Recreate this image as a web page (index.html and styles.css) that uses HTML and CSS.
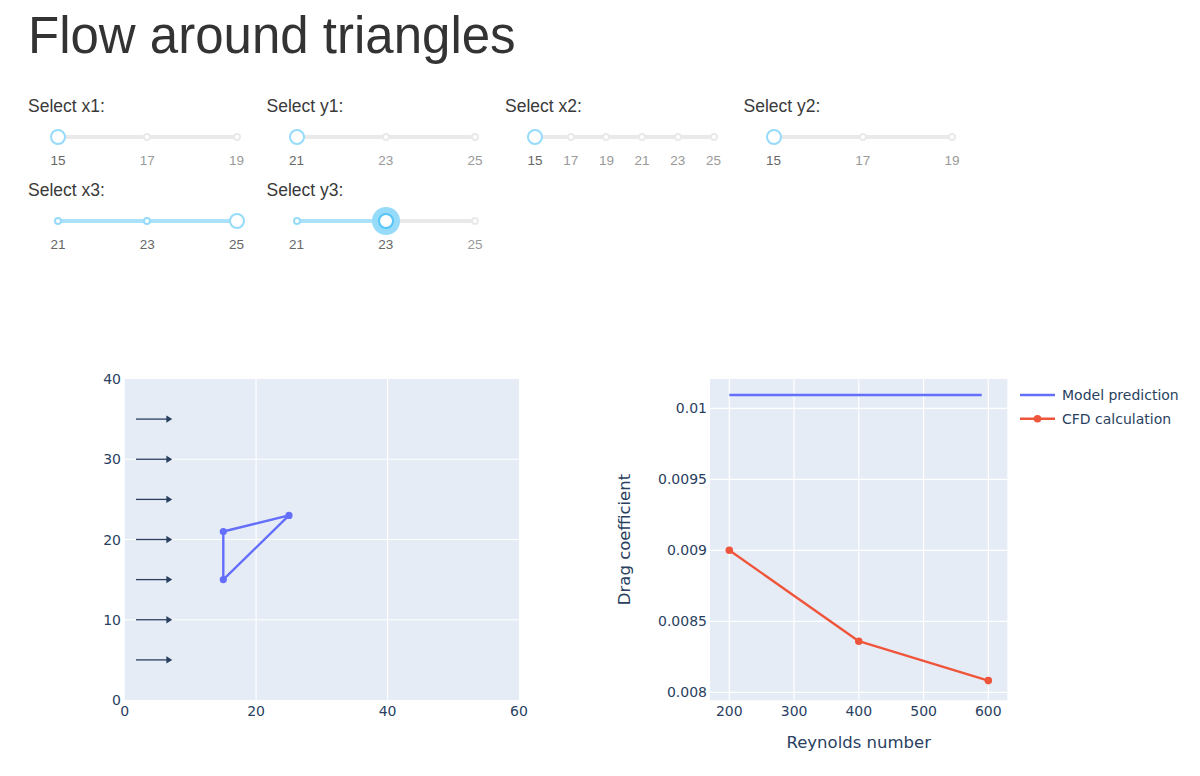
FILE: index.html
```html
<!DOCTYPE html>
<html>
<head>
<meta charset="utf-8">
<title>Flow around triangles</title>
<link rel="stylesheet" href="styles.css">
</head>
<body>
<div class="page">
  <h1 class="title">Flow around triangles</h1>
  <div class="sliders">
    <div class="field">
      <div class="label">Select x1:</div>
      <div class="slider">
        <div class="rail"></div>
        <span class="dot active" style="left:0%"></span>
        <span class="dot" style="left:50%"></span>
        <span class="dot" style="left:100%"></span>
        <span class="handle" style="left:0%"></span>
        <span class="mark active" style="left:0%">15</span>
        <span class="mark" style="left:50%">17</span>
        <span class="mark" style="left:100%">19</span>
      </div>
    </div>
    <div class="field">
      <div class="label">Select y1:</div>
      <div class="slider">
        <div class="rail"></div>
        <span class="dot active" style="left:0%"></span>
        <span class="dot" style="left:50%"></span>
        <span class="dot" style="left:100%"></span>
        <span class="handle" style="left:0%"></span>
        <span class="mark active" style="left:0%">21</span>
        <span class="mark" style="left:50%">23</span>
        <span class="mark" style="left:100%">25</span>
      </div>
    </div>
    <div class="field">
      <div class="label">Select x2:</div>
      <div class="slider">
        <div class="rail"></div>
        <span class="dot active" style="left:0%"></span>
        <span class="dot" style="left:20%"></span>
        <span class="dot" style="left:40%"></span>
        <span class="dot" style="left:60%"></span>
        <span class="dot" style="left:80%"></span>
        <span class="dot" style="left:100%"></span>
        <span class="handle" style="left:0%"></span>
        <span class="mark active" style="left:0%">15</span>
        <span class="mark" style="left:20%">17</span>
        <span class="mark" style="left:40%">19</span>
        <span class="mark" style="left:60%">21</span>
        <span class="mark" style="left:80%">23</span>
        <span class="mark" style="left:100%">25</span>
      </div>
    </div>
    <div class="field">
      <div class="label">Select y2:</div>
      <div class="slider">
        <div class="rail"></div>
        <span class="dot active" style="left:0%"></span>
        <span class="dot" style="left:50%"></span>
        <span class="dot" style="left:100%"></span>
        <span class="handle" style="left:0%"></span>
        <span class="mark active" style="left:0%">15</span>
        <span class="mark" style="left:50%">17</span>
        <span class="mark" style="left:100%">19</span>
      </div>
    </div>
    <div class="field">
      <div class="label">Select x3:</div>
      <div class="slider">
        <div class="rail"></div>
        <div class="track" style="width:100%"></div>
        <span class="dot active" style="left:0%"></span>
        <span class="dot active" style="left:50%"></span>
        <span class="dot active" style="left:100%"></span>
        <span class="handle" style="left:100%"></span>
        <span class="mark active" style="left:0%">21</span>
        <span class="mark active" style="left:50%">23</span>
        <span class="mark active" style="left:100%">25</span>
      </div>
    </div>
    <div class="field">
      <div class="label">Select y3:</div>
      <div class="slider">
        <div class="rail"></div>
        <div class="track" style="width:50%"></div>
        <span class="dot active" style="left:0%"></span>
        <span class="dot active" style="left:50%"></span>
        <span class="dot" style="left:100%"></span>
        <span class="handle focus" style="left:50%"></span>
        <span class="mark active" style="left:0%">21</span>
        <span class="mark active" style="left:50%">23</span>
        <span class="mark" style="left:100%">25</span>
      </div>
    </div>
  </div>

  <div class="graphs">
    <div class="graph">
      <svg class="chart" width="586" height="500" viewBox="0 0 586 500" xmlns="http://www.w3.org/2000/svg">
        <rect x="96.7" y="119" width="394.3" height="321" fill="#e5ecf6"/>
        <g stroke="#ffffff" stroke-width="1.2">
          <line x1="228.1" y1="119" x2="228.1" y2="440"/>
          <line x1="359.6" y1="119" x2="359.6" y2="440"/>
          <line x1="96.7" y1="359.75" x2="491" y2="359.75"/>
          <line x1="96.7" y1="279.5" x2="491" y2="279.5"/>
          <line x1="96.7" y1="199.25" x2="491" y2="199.25"/>
        </g>
        <g stroke="#2a3f5f" stroke-width="1.3" fill="#2a3f5f">
          <line x1="108" y1="159.1" x2="140" y2="159.1"/><polygon points="139,156.6 143,159.1 139,161.6"/>
          <line x1="108" y1="199.25" x2="140" y2="199.25"/><polygon points="139,196.75 143,199.25 139,201.75"/>
          <line x1="108" y1="239.4" x2="140" y2="239.4"/><polygon points="139,236.9 143,239.4 139,241.9"/>
          <line x1="108" y1="279.5" x2="140" y2="279.5"/><polygon points="139,277 143,279.5 139,282"/>
          <line x1="108" y1="319.6" x2="140" y2="319.6"/><polygon points="139,317.1 143,319.6 139,322.1"/>
          <line x1="108" y1="359.75" x2="140" y2="359.75"/><polygon points="139,357.25 143,359.75 139,362.25"/>
          <line x1="108" y1="399.9" x2="140" y2="399.9"/><polygon points="139,397.4 143,399.9 139,402.4"/>
        </g>
        <polyline points="195.3,319.6 195.3,271.5 261,255.4 195.3,319.6" fill="none" stroke="#636efa" stroke-width="2.4" stroke-linejoin="round"/>
        <g fill="#636efa">
          <circle cx="195.3" cy="319.6" r="3.6"/>
          <circle cx="195.3" cy="271.5" r="3.6"/>
          <circle cx="261" cy="255.4" r="3.6"/>
        </g>
        <g class="tick" text-anchor="end">
          <text x="93" y="124">40</text>
          <text x="93" y="204.25">30</text>
          <text x="93" y="284.5">20</text>
          <text x="93" y="364.75">10</text>
          <text x="93" y="445">0</text>
        </g>
        <g class="tick" text-anchor="middle">
          <text x="96.7" y="456">0</text>
          <text x="228.1" y="456">20</text>
          <text x="359.6" y="456">40</text>
          <text x="490.9" y="456">60</text>
        </g>
      </svg>
    </div>
    <div class="graph">
      <svg class="chart" width="586" height="500" viewBox="0 0 586 500" xmlns="http://www.w3.org/2000/svg">
        <rect x="96" y="119" width="297.3" height="321.3" fill="#e5ecf6"/>
        <g stroke="#ffffff" stroke-width="1.2">
          <line x1="115.3" y1="119" x2="115.3" y2="440.3"/>
          <line x1="180.1" y1="119" x2="180.1" y2="440.3"/>
          <line x1="244.8" y1="119" x2="244.8" y2="440.3"/>
          <line x1="309.6" y1="119" x2="309.6" y2="440.3"/>
          <line x1="374.3" y1="119" x2="374.3" y2="440.3"/>
          <line x1="96" y1="148.3" x2="393.3" y2="148.3"/>
          <line x1="96" y1="219.3" x2="393.3" y2="219.3"/>
          <line x1="96" y1="290.3" x2="393.3" y2="290.3"/>
          <line x1="96" y1="361.3" x2="393.3" y2="361.3"/>
          <line x1="96" y1="432.3" x2="393.3" y2="432.3"/>
        </g>
        <line x1="115.3" y1="135" x2="367.7" y2="135" stroke="#636efa" stroke-width="2.4"/>
        <polyline points="115.3,290.3 244.8,381.2 374.3,420.6" fill="none" stroke="#ef553b" stroke-width="2.4" stroke-linejoin="round"/>
        <g fill="#ef553b">
          <circle cx="115.3" cy="290.3" r="3.8"/>
          <circle cx="244.8" cy="381.2" r="3.8"/>
          <circle cx="374.3" cy="420.6" r="3.8"/>
        </g>
        <g class="tick" text-anchor="end">
          <text x="93" y="153.3">0.01</text>
          <text x="93" y="224.3">0.0095</text>
          <text x="93" y="295.3">0.009</text>
          <text x="93" y="366.3">0.0085</text>
          <text x="93" y="437.3">0.008</text>
        </g>
        <g class="tick" text-anchor="middle">
          <text x="115.3" y="456">200</text>
          <text x="180.1" y="456">300</text>
          <text x="244.8" y="456">400</text>
          <text x="309.6" y="456">500</text>
          <text x="374.3" y="456">600</text>
        </g>
        <text class="axis-title" x="244.7" y="488" text-anchor="middle">Reynolds number</text>
        <text class="axis-title" transform="translate(16 279.5) rotate(-90)" text-anchor="middle">Drag coefficient</text>
        <line x1="406" y1="135" x2="441" y2="135" stroke="#636efa" stroke-width="2.4"/>
        <text class="legend" x="448" y="140">Model prediction</text>
        <line x1="406" y1="158.7" x2="441" y2="158.7" stroke="#ef553b" stroke-width="2.4"/>
        <circle cx="423.5" cy="158.7" r="3.8" fill="#ef553b"/>
        <text class="legend" x="448" y="163.7">CFD calculation</text>
      </svg>
    </div>
  </div>
</div>
</body>
</html>
```

FILE: styles.css
```css
html, body {
  margin: 0;
  padding: 0;
  background: #ffffff;
  overflow: hidden;
}

.page {
  padding: 6px 0 0 28px;
  font-family: "Liberation Sans", Arial, Helvetica, sans-serif;
  color: #333333;
}

.title {
  margin: 0;
  font-size: 51px;
  line-height: 60px;
  font-weight: normal;
  color: #333333;
}

.sliders {
  margin-top: 30px;
  display: grid;
  grid-template-columns: repeat(4, 238.5px);
  grid-auto-rows: 80px;
  row-gap: 4px;
}

.label {
  font-size: 17.5px;
  line-height: 20px;
  color: #3a3a3a;
}

.slider {
  position: relative;
  height: 60px;
  margin: 0 30px;
}

.rail {
  position: absolute;
  top: 19px;
  left: 0;
  right: 0;
  height: 4px;
  border-radius: 2px;
  background: #e9e9e9;
}

.track {
  position: absolute;
  top: 19px;
  left: 0;
  height: 4px;
  border-radius: 2px;
  background: #abe2fb;
}

.dot {
  position: absolute;
  top: 21px;
  width: 8px;
  height: 8px;
  box-sizing: border-box;
  border: 2px solid #e9e9e9;
  border-radius: 50%;
  background: #ffffff;
  transform: translate(-50%, -50%);
}

.dot.active {
  border-color: #96dbfa;
}

.handle {
  position: absolute;
  top: 21px;
  width: 16px;
  height: 16px;
  box-sizing: border-box;
  border: 2px solid #96dbfa;
  border-radius: 50%;
  background: #ffffff;
  transform: translate(-50%, -50%);
}

.handle.focus {
  border-color: #57c5f7;
  box-shadow: 0 0 0 6px #96dbfa;
}

.mark {
  position: absolute;
  top: 37px;
  font-size: 13.5px;
  line-height: 15px;
  color: #999999;
  transform: translateX(-50%);
  white-space: nowrap;
}

.mark.active {
  color: #666666;
}

.graphs {
  display: flex;
}

.graph {
  width: 586px;
  flex: none;
}

.chart {
  display: block;
}

.tick {
  font-family: "DejaVu Sans", Verdana, sans-serif;
  font-size: 14px;
  fill: #2a3f5f;
}

.legend {
  font-family: "DejaVu Sans", Verdana, sans-serif;
  font-size: 14px;
  fill: #2a3f5f;
}

.axis-title {
  font-family: "DejaVu Sans", Verdana, sans-serif;
  font-size: 16.5px;
  fill: #2a3f5f;
}
```
